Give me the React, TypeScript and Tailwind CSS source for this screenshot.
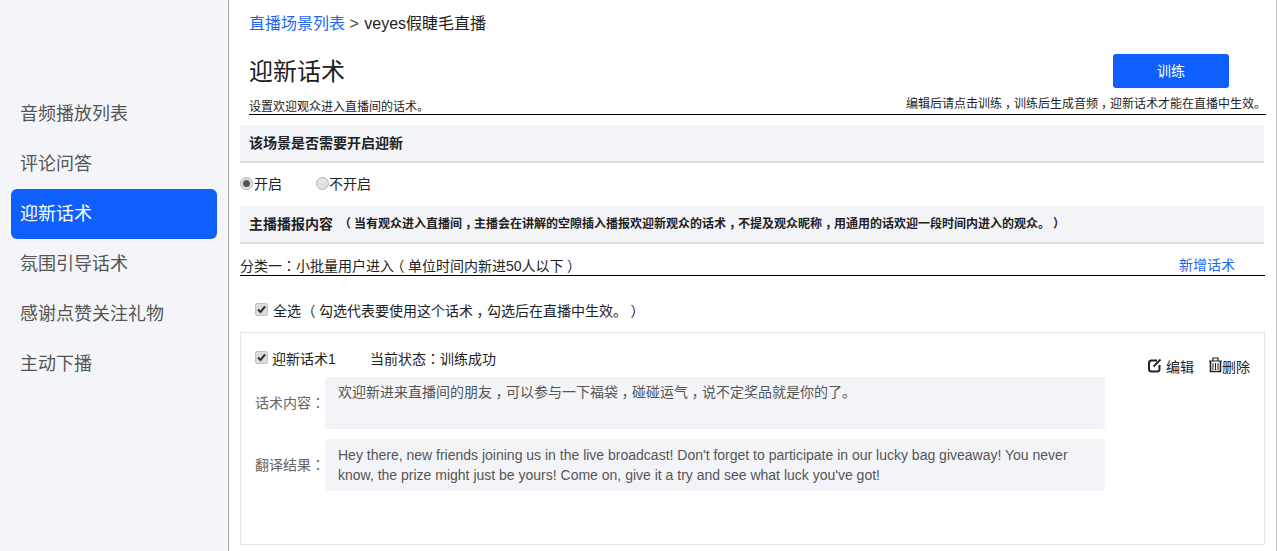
import React from "react";

const navItems = ["音频播放列表", "评论问答", "迎新话术", "氛围引导话术", "感谢点赞关注礼物", "主动下播"];

// the reference centres commas and brackets in their cell, colons are centred in the TC cut
function Zh({ text }: { text: string }) {
  return (
    <>
      {text.split(/([，（）：])/).map((part, i) => {
        if (i % 2 === 0) return part;
        if (part === "：") {
          return (
            <span key={i} className="font-['Noto_Sans_CJK_TC']">
              {part}
            </span>
          );
        }
        return (
          <span key={i} className="inline-block w-[1em] text-center [font-feature-settings:'halt']">
            {part}
          </span>
        );
      })}
    </>
  );
}

function Check() {
  return (
    <span className="w-[13px] h-[13px] mt-[-4px] rounded-[2px] bg-[#dcdcdc] border border-[#c4c4c4] flex items-center justify-center shrink-0">
      <svg width="11" height="11" viewBox="0 0 11 11">
        <path d="M2 5.5 L4.5 8 L9 2.5" fill="none" stroke="#333" strokeWidth="2" />
      </svg>
    </span>
  );
}

function Radio({ on }: { on?: boolean }) {
  return (
    <span className="w-[13px] h-[13px] mt-[-3px] rounded-full bg-[#e2e2e2] border border-[#b4b4b4] flex items-center justify-center shrink-0">
      {on && <span className="w-[7px] h-[7px] rounded-full bg-[#555]" />}
    </span>
  );
}

export default function App() {
  return (
    <div className="flex h-[551px] w-[1277px] overflow-hidden bg-white text-[14px] text-[#222] font-['Liberation_Sans','Noto_Sans_CJK_SC',sans-serif]">
      {/* Sidebar */}
      <div className="w-[229px] shrink-0 bg-[#f3f5f9] border-r border-[#a9a9a9] pt-[89px] px-[11px]">
        {navItems.map((item) =>
          item === "迎新话术" ? (
            <div key={item} className="h-[50px] rounded-[6px] bg-[#0f5fff] text-white text-[18px] flex items-center pl-[9px]">
              {item}
            </div>
          ) : (
            <div key={item} className="h-[50px] text-[#555] text-[18px] flex items-center pl-[9px]">
              {item}
            </div>
          )
        )}
      </div>

      {/* Main */}
      <div className="w-[1048px] shrink-0 border-r border-[#c8c8c8] pl-[11px] pr-[11px]">
        <div className="pl-[9px] h-[47px] pt-[12px] text-[16px] leading-[24px]">
          <span className="text-[#1f66f2]">直播场景列表</span> <span className="text-[#444]">&gt;</span>{" "}
          <span className="ml-px">veyes假睫毛直播</span>
        </div>

        <div className="ml-[9px] mr-[-1px] h-[68px] border-b border-black flex justify-between">
          <div>
            <div className="text-[24px] leading-[48px] pt-px">迎新话术</div>
            <div className="text-[12px] leading-[18px] mt-[2px]">设置欢迎观众进入直播间的话术。</div>
          </div>
          <div className="flex flex-col items-end">
            <button className="w-[116px] h-[34px] mt-[7px] mr-[37px] rounded-[3px] bg-[#0f5fff] text-white text-[14px]">训练</button>
            <div className="text-[12px] leading-[18px] mt-[7px]">
              <Zh text="编辑后请点击训练，训练后生成音频，迎新话术才能在直播中生效。" />
            </div>
          </div>
        </div>

        <div className="mt-[10px] mr-px h-[38px] bg-[#f3f4f8] border-b-2 border-[#dedede] pl-[9px] flex items-center font-bold text-[14px]">
          该场景是否需要开启迎新
        </div>

        <div className="h-[43px] flex items-center text-[14px]">
          <Radio on />
          <span className="ml-px">开启</span>
          <span className="ml-[34px] flex items-center">
            <Radio />
            <span>不开启</span>
          </span>
        </div>

        <div className="h-[38px] mr-px bg-[#f3f4f8] border-b-2 border-[#dedede] pl-[9px] flex items-center font-bold text-[12px]">
          <span className="text-[14px] mr-[9px]">主播播报内容</span>
          <span>
            <Zh text="（当有观众进入直播间，主播会在讲解的空隙插入播报欢迎新观众的话术，不提及观众昵称，用通用的话欢迎一段时间内进入的观众。）" />
          </span>
        </div>

        <div className="h-[32px] border-b border-black flex items-center justify-between text-[14px] pt-[12px]">
          <span>
            <Zh text="分类一：小批量用户进入（单位时间内新进50人以下）" />
          </span>
          <span className="text-[#1f66f2] mr-[30px]">新增话术</span>
        </div>

        <div className="h-[56px] pl-[15px] pt-[14px] flex items-center text-[14px]">
          <Check />
          <span className="ml-[5px]">
            <Zh text="全选 （勾选代表要使用这个话术，勾选后在直播中生效。）" />
          </span>
        </div>

        <div className="h-[213px] border border-[#e3e3e3] pl-[14px] pr-[14px] text-[14px]">
          <div className="h-[52px] flex items-center">
            <Check />
            <span className="ml-[4px] w-[98px]">迎新话术1</span>
            <span>
              <Zh text="当前状态：训练成功" />
            </span>
            <div className="ml-auto mt-[16px] flex items-center">
              <svg className="mt-[-4px]" width="14" height="15" viewBox="0 0 14 15" fill="none" stroke="#222">
                <path d="M9 2.5 H3.5 Q1 2.5 1 5 V11 Q1 13.5 3.5 13.5 H9 Q11.5 13.5 11.5 11 V7" strokeWidth="2" />
                <path d="M5.5 8.5 L12.5 1.5" strokeWidth="1.8" />
              </svg>
              <span className="ml-[4px]">编辑</span>
              <svg className="ml-[15px] mt-[-5px]" width="13" height="16" viewBox="0 0 13 16" fill="none" stroke="#222">
                <path d="M0 4 H13 M4 3.5 V1 H9 V3.5" strokeWidth="1.2" />
                <path d="M1.5 4 V14.5 H11.5 V4" strokeWidth="1.6" />
                <path d="M4 6 V13 M6.5 6 V13 M9 6 V13" strokeWidth="1" />
              </svg>
              <span>删除</span>
            </div>
          </div>

          <div className="flex items-center h-[52px] mt-[-8px]">
            <span className="w-[70px] shrink-0 text-[#666]">
              <Zh text="话术内容：" />
            </span>
            <div className="w-[780px] h-[52px] bg-[#f3f4f8] rounded-[2px] px-[13px] pt-[5px] leading-[20px] text-[#555]">
              <Zh text="欢迎新进来直播间的朋友，可以参与一下福袋，碰碰运气，说不定奖品就是你的了。" />
            </div>
          </div>

          <div className="flex items-center h-[52px] mt-[10px]">
            <span className="w-[70px] shrink-0 text-[#666]">
              <Zh text="翻译结果：" />
            </span>
            <div className="w-[780px] h-[52px] bg-[#f3f4f8] rounded-[2px] px-[13px] pt-[6px] leading-[20px] text-[#555]">
              Hey there, new friends joining us in the live broadcast! Don't forget to participate in our lucky bag giveaway! You never know, the prize might just be yours! Come on, give it a try and see what luck you've got!
            </div>
          </div>
        </div>
      </div>
    </div>
  );
}
